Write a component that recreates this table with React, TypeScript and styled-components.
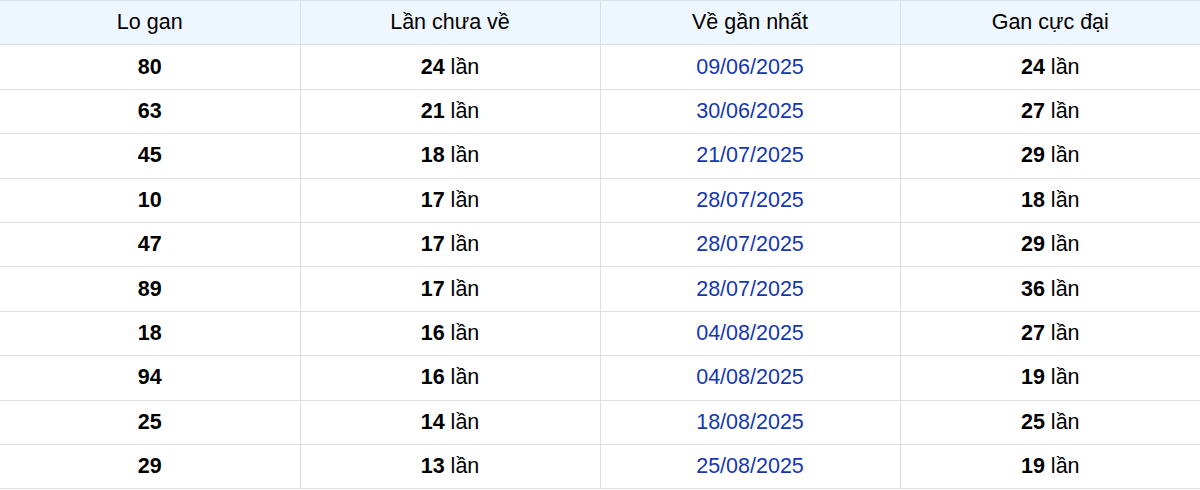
import React from 'react'
import styled, { createGlobalStyle } from 'styled-components'

const GlobalStyle = createGlobalStyle`
  html, body {
    margin: 0;
    padding: 0;
    background: #ffffff;
  }
  body {
    font-family: "Liberation Sans", Arial, sans-serif;
  }
`

const rows = [
  { lo: '80', chua: 24, date: '09/06/2025', max: 24 },
  { lo: '63', chua: 21, date: '30/06/2025', max: 27 },
  { lo: '45', chua: 18, date: '21/07/2025', max: 29 },
  { lo: '10', chua: 17, date: '28/07/2025', max: 18 },
  { lo: '47', chua: 17, date: '28/07/2025', max: 29 },
  { lo: '89', chua: 17, date: '28/07/2025', max: 36 },
  { lo: '18', chua: 16, date: '04/08/2025', max: 27 },
  { lo: '94', chua: 16, date: '04/08/2025', max: 19 },
  { lo: '25', chua: 14, date: '18/08/2025', max: 25 },
  { lo: '29', chua: 13, date: '25/08/2025', max: 19 },
]

const Table = styled.table`
  width: 1200px;
  border-collapse: collapse;
  table-layout: fixed;
  font-size: 21.5px;
  color: #000000;
`

const HeadCell = styled.th`
  height: 43.4px;
  padding: 0;
  font-weight: 400;
  text-align: center;
  background: #eef6ff;
  border-top: 1px solid #dcdfe4;
  border-bottom: 1px solid #dcdfe4;
  border-left: 1px solid #dcdfe4;
  &:first-child {
    border-left: none;
  }
`

const Cell = styled.td`
  height: 43.4px;
  padding: 0;
  text-align: center;
  border-bottom: 1px solid #dcdfe4;
  border-left: 1px solid #dcdfe4;
  &:first-child {
    border-left: none;
  }
`

const Num = styled.b`
  font-weight: 700;
`

const DateText = styled.span`
  color: #1437b0;
`

const Times: React.FC<{ n: number }> = ({ n }) => (
  <>
    <Num>{n}</Num> lần
  </>
)

export default function App() {
  return (
    <>
      <GlobalStyle />
      <Table>
        <thead>
          <tr>
            <HeadCell>Lo gan</HeadCell>
            <HeadCell>Lần chưa về</HeadCell>
            <HeadCell>Về gần nhất</HeadCell>
            <HeadCell>Gan cực đại</HeadCell>
          </tr>
        </thead>
        <tbody>
          {rows.map((r) => (
            <tr key={r.lo}>
              <Cell>
                <Num>{r.lo}</Num>
              </Cell>
              <Cell>
                <Times n={r.chua} />
              </Cell>
              <Cell>
                <DateText>{r.date}</DateText>
              </Cell>
              <Cell>
                <Times n={r.max} />
              </Cell>
            </tr>
          ))}
        </tbody>
      </Table>
    </>
  )
}
